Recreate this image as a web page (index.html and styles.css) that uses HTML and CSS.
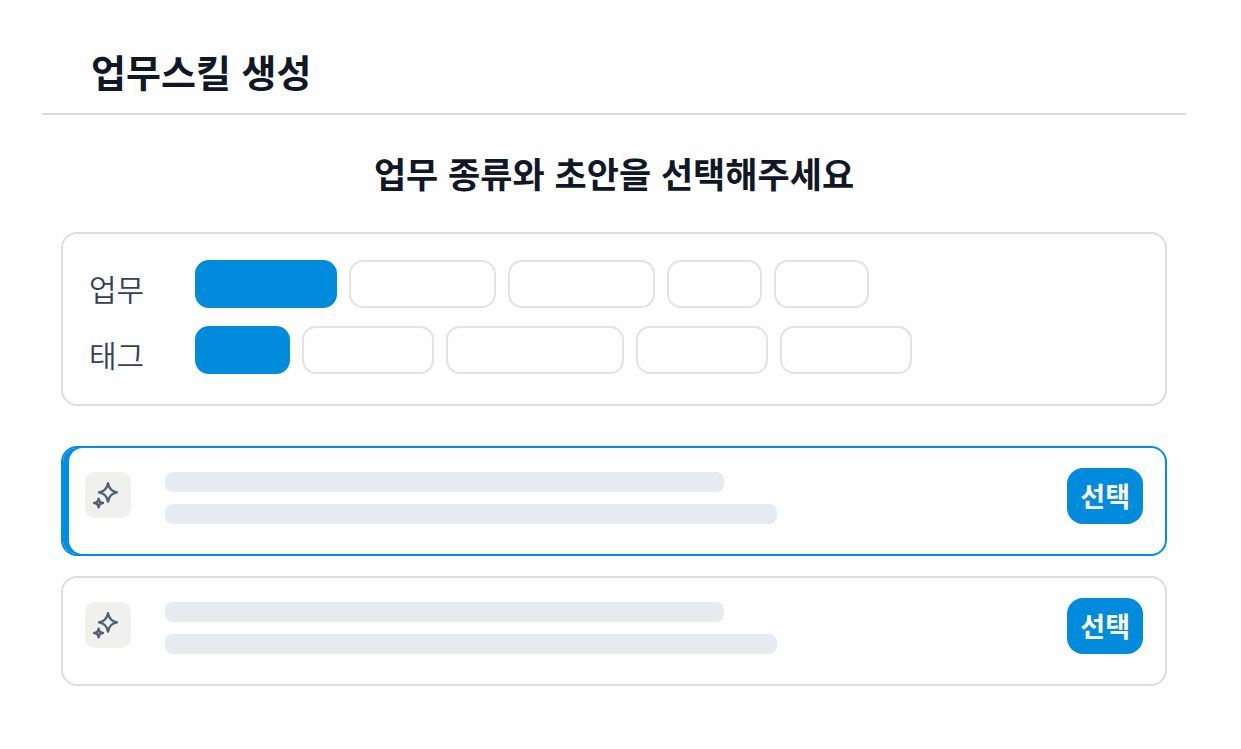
FILE: index.html
```html
<!DOCTYPE html>
<html lang="ko">
<head>
<meta charset="utf-8">
<title>업무스킬 생성</title>
<link rel="stylesheet" href="styles.css">
</head>
<body>
<main class="page">
  <header class="page-header">
    <h1 class="page-title">업무스킬 생성</h1>
  </header>
  <div class="content">
    <h2 class="prompt">업무 종류와 초안을 선택해주세요</h2>
    <section class="filters">
      <div class="filter-row">
        <span class="filter-label" id="task-label">업무</span>
        <div class="chips" role="group" aria-labelledby="task-label">
          <button type="button" class="chip chip-active chip-md"></button>
          <button type="button" class="chip chip-lg"></button>
          <button type="button" class="chip chip-lg"></button>
          <button type="button" class="chip chip-xs"></button>
          <button type="button" class="chip chip-xs"></button>
        </div>
      </div>
      <div class="filter-row">
        <span class="filter-label" id="tag-label">태그</span>
        <div class="chips" role="group" aria-labelledby="tag-label">
          <button type="button" class="chip chip-active chip-xs"></button>
          <button type="button" class="chip chip-sm"></button>
          <button type="button" class="chip chip-xl"></button>
          <button type="button" class="chip chip-sm"></button>
          <button type="button" class="chip chip-sm"></button>
        </div>
      </div>
    </section>
    <section class="drafts">
      <article class="draft draft-selected">
        <svg class="draft-icon" viewBox="0 0 46 46" aria-hidden="true">
          <path d="M23 11.3 Q24.3 19.1 32 20.4 Q24.3 21.7 23 29.5 Q21.7 21.7 14 20.4 Q21.7 19.1 23 11.3Z"/>
          <path d="M13.6 26.6 Q13.9 30.7 18 31 Q13.9 31.3 13.6 35.4 Q13.3 31.3 9.2 31 Q13.3 30.7 13.6 26.6Z"/>
        </svg>
        <div class="lines"><div class="line line-short"></div><div class="line"></div></div>
        <button type="button" class="select">선택</button>
      </article>
      <article class="draft">
        <svg class="draft-icon" viewBox="0 0 46 46" aria-hidden="true">
          <path d="M23 11.3 Q24.3 19.1 32 20.4 Q24.3 21.7 23 29.5 Q21.7 21.7 14 20.4 Q21.7 19.1 23 11.3Z"/>
          <path d="M13.6 26.6 Q13.9 30.7 18 31 Q13.9 31.3 13.6 35.4 Q13.3 31.3 9.2 31 Q13.3 30.7 13.6 26.6Z"/>
        </svg>
        <div class="lines"><div class="line line-short"></div><div class="line"></div></div>
        <button type="button" class="select">선택</button>
      </article>
    </section>
  </div>
</main>
</body>
</html>
```
FILE: styles.css
```css
* {
  box-sizing: border-box;
}

body {
  margin: 0;
  background: #fefefe;
  color: #101828;
  font-family: "Noto Sans CJK KR", sans-serif;
}

.page {
  padding: 43px 55px 44px 42px;
}

.page-header {
  padding: 0 50px 14px 49px;
  border-bottom: 2px solid #dedad7;
}

.page-title,
.prompt {
  margin: 0;
  font-weight: 700;
}

.page-title {
  font-size: 38px;
  line-height: 56px;
}

.content {
  padding: 32px 19px 0;
}

.prompt {
  margin-bottom: 33px;
  font-size: 35px;
  line-height: 52px;
  text-align: center;
}

.filters {
  display: flex;
  flex-direction: column;
  gap: 18px;
  padding: 26px 26px 30px;
  border: 2px solid #dedede;
  border-radius: 16px;
}

.filter-row {
  display: flex;
}

.filter-label {
  flex: none;
  width: 106px;
  padding-top: 8px;
  color: #344054;
  font-size: 30px;
  font-weight: 350;
  line-height: 40px;
}

.chips {
  display: flex;
  flex-wrap: wrap;
  gap: 12px;
}

.chip {
  height: 48px;
  padding: 0;
  border: 2px solid #e3e3e3;
  border-radius: 14px;
  background: #fefefe;
}

.chip-active {
  border-color: #008bdd;
  background: #008bdd;
}

.chip-xs { width: 95px; }
.chip-sm { width: 132px; }
.chip-md { width: 142px; }
.chip-lg { width: 147px; }
.chip-xl { width: 178px; }

.drafts {
  display: flex;
  flex-direction: column;
  gap: 20px;
  margin-top: 40px;
}

.draft {
  display: flex;
  align-items: flex-start;
  padding: 20px 22px 30px;
  border: 2px solid #dedede;
  border-radius: 16px;
}

.draft-selected {
  border-color: #008ce8;
  box-shadow: inset 6px 0 0 #008ce8;
}

.draft-icon {
  flex: none;
  width: 46px;
  height: 46px;
  margin-top: 4px;
  border-radius: 10px;
  background: #f0f0ef;
  fill: none;
  stroke: #566070;
  stroke-width: 2.4;
  stroke-linejoin: round;
}

.lines {
  display: flex;
  flex: 1;
  flex-direction: column;
  gap: 12px;
  padding: 4px 34px 0;
}

.line {
  width: 100%;
  max-width: 612px;
  height: 20px;
  border-radius: 8px;
  background: #e7ebef;
}

.line-short {
  max-width: 559px;
}

.select {
  flex: none;
  height: 56px;
  padding: 0 13px;
  border: 0;
  border-radius: 16px;
  background: #008bdd;
  color: #fff;
  font-family: inherit;
  font-size: 27px;
  font-weight: 700;
  line-height: 56px;
}
```
